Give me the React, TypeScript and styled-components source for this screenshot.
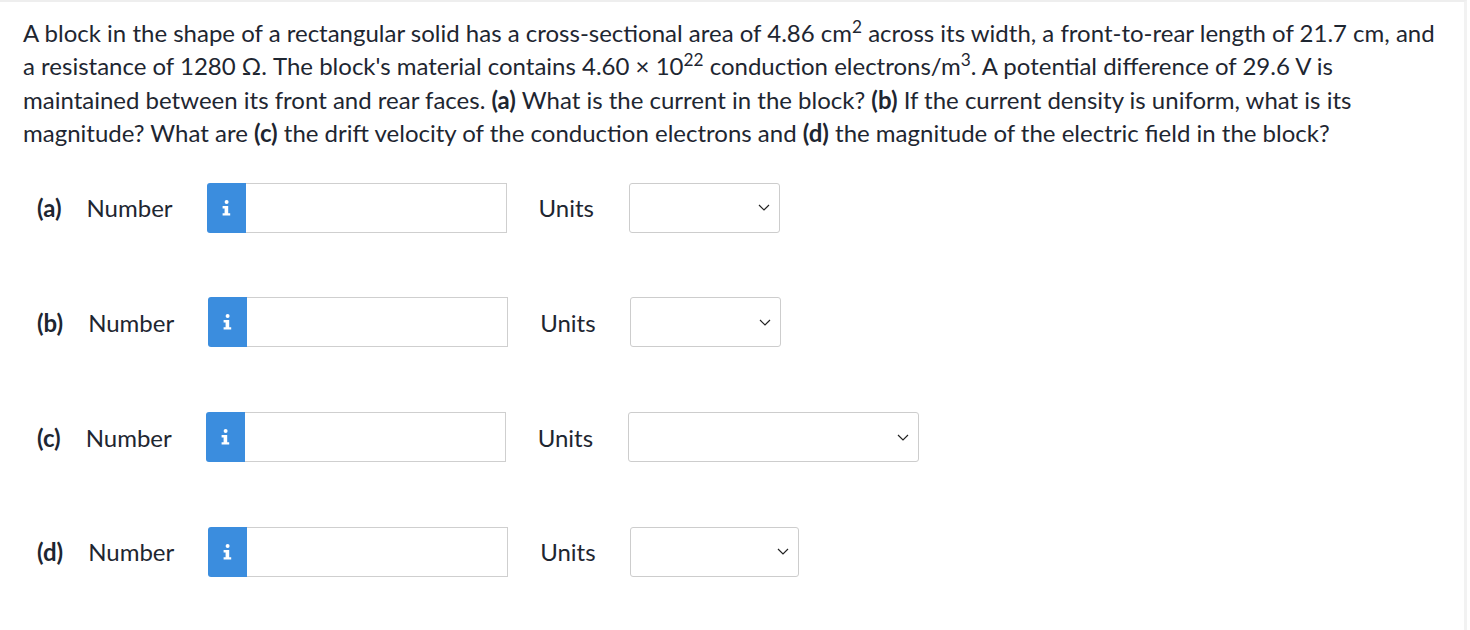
import React from "react";
import styled, { createGlobalStyle } from "styled-components";

const GlobalStyle = createGlobalStyle`
  html, body {
    margin: 0;
    padding: 0;
    background: #ffffff;
  }
  body {
    font-family: Lato, "Open Sans", sans-serif;
    color: #1e2631;
  }
`;

const Page = styled.div`
  width: 1467px;
  height: 630px;
  box-sizing: border-box;
  border-top: 2px solid #eeeeee;
  border-right: 3px solid #f2f2f2;
  padding: 14px 0 0 23px;
  overflow: hidden;
`;

const Question = styled.p`
  margin: 0;
  max-width: 1425px;
  font-size: 24px;
  line-height: 33.4px;
  b {
    font-weight: 700;
  }
  sup {
    font-size: 0.72em;
    line-height: 1;
    vertical-align: 0.5em;
  }
`;

const Answers = styled.div`
  display: flex;
  flex-direction: column;
  gap: 64.7px;
  padding: 33px 0 0 14px;
`;

const Row = styled.div`
  display: flex;
  align-items: center;
  height: 50px;
`;

const PartLabel = styled.span`
  font-size: 24px;
  font-weight: 700;
  margin-right: 25px;
`;

const FieldLabel = styled.span`
  font-size: 24px;
  width: 120px;
`;

const InfoButton = styled.button`
  width: 39px;
  height: 50px;
  border: none;
  border-radius: 3px 0 0 3px;
  background: #3b8dde;
  padding: 0;
  display: flex;
  align-items: center;
  justify-content: center;
  cursor: pointer;
`;

const NumberInput = styled.input`
  width: 261px;
  height: 50px;
  box-sizing: border-box;
  border: 1px solid #cfcfcf;
  border-left: none;
  outline: none;
  font-size: 20px;
`;

const UnitsLabel = styled.span`
  font-size: 24px;
  margin-left: 32px;
  width: 90px;
`;

const Select = styled.div<{ $width: number }>`
  width: ${({ $width }) => $width}px;
  height: 50px;
  box-sizing: border-box;
  border: 1px solid #cdcdcd;
  border-radius: 3px;
  display: flex;
  align-items: center;
  justify-content: flex-end;
  padding-right: 9px;
`;

const InfoIcon = () => (
  <svg width="9" height="16" viewBox="0 0 9 16">
    <circle cx="4.6" cy="2" r="2" fill="#fff" />
    <path d="M0.6 6h5.6v7.2h2v2.4H0.6v-2.4h2V8.4h-2z" fill="#fff" />
  </svg>
);

const Chevron = () => (
  <svg width="12" height="7" viewBox="0 0 12 7">
    <path d="M1 1l5 5 5-5" fill="none" stroke="#222" strokeWidth="1.2" />
  </svg>
);

const parts = [
  { id: "a", select: 151 },
  { id: "b", select: 151 },
  { id: "c", select: 291 },
  { id: "d", select: 169 },
];

export default function App() {
  return (
    <>
      <GlobalStyle />
      <Page>
        <Question>
          A block in the shape of a rectangular solid has a cross-sectional
          area of 4.86 cm<sup>2</sup> across its width, a front-to-rear length
          of 21.7 cm, and a resistance of 1280 Ω. The block's material contains
          4.60 × 10<sup>22</sup> conduction electrons/m<sup>3</sup>. A potential
          difference of 29.6 V is maintained between its front and rear faces.{" "}
          <b>(a)</b> What is the current in the block? <b>(b)</b> If the current
          density is uniform, what is its magnitude? What are <b>(c)</b> the
          drift velocity of the conduction electrons and <b>(d)</b> the
          magnitude of the electric field in the block?
        </Question>
        <Answers>
          {parts.map((p) => (
            <Row key={p.id}>
              <PartLabel>({p.id})</PartLabel>
              <FieldLabel>Number</FieldLabel>
              <InfoButton>
                <InfoIcon />
              </InfoButton>
              <NumberInput />
              <UnitsLabel>Units</UnitsLabel>
              <Select $width={p.select}>
                <Chevron />
              </Select>
            </Row>
          ))}
        </Answers>
      </Page>
    </>
  );
}
